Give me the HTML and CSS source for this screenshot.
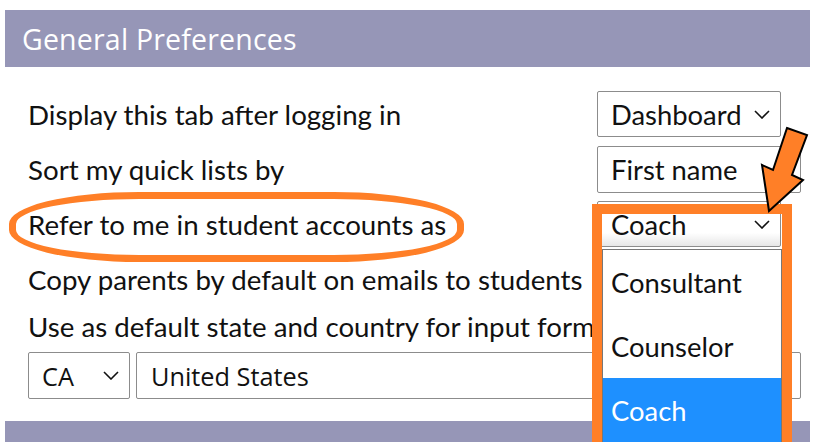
FILE: index.html
```html
<!DOCTYPE html>
<html lang="en">
<head>
<meta charset="utf-8">
<title>General Preferences</title>
<link rel="stylesheet" href="styles.css">
</head>
<body>
<div class="page">
  <div class="bar">General Preferences</div>
  <div class="prefs">
    <div class="row">
      <span class="label">Display this tab after logging in</span>
      <div class="select sel-dash"><span>Dashboard</span><svg class="chev" viewBox="0 0 16 9" width="16" height="9"><polyline points="1,1 8,8 15,1"/></svg></div>
    </div>
    <div class="row">
      <span class="label">Sort my quick lists by</span>
      <div class="select sel-first"><span>First name</span><svg class="chev" viewBox="0 0 16 9" width="16" height="9"><polyline points="1,1 8,8 15,1"/></svg></div>
    </div>
    <div class="row">
      <span class="label">Refer to me in student accounts as</span>
      <div class="select sel-coach"><span>Coach</span><svg class="chev" viewBox="0 0 16 9" width="16" height="9"><polyline points="1,1 8,8 15,1"/></svg></div>
    </div>
    <div class="row row-text">
      <span class="label">Copy parents by default on emails to students</span>
    </div>
    <div class="row row-text">
      <span class="label">Use as default state and country for input forms</span>
    </div>
    <div class="loc">
      <div class="select sel-state"><span>CA</span><svg class="chev" viewBox="0 0 16 9" width="16" height="9"><polyline points="1,1 8,8 15,1"/></svg></div>
      <div class="input-country">United States</div>
    </div>
  </div>
  <div class="bar bar-next">Student College Plan Settings Module Emails</div>

  <div class="ellipse"></div>
  <ul class="dropdown">
    <li>Consultant</li>
    <li>Counselor</li>
    <li class="active">Coach</li>
  </ul>
  <div class="highlight"></div>
  <svg class="arrow" viewBox="0 0 820 442" width="820" height="442">
    <polygon points="787,128 807,135 792,175 803,180 769,211 762,165 773,170"/>
  </svg>
</div>
</body>
</html>
```
FILE: styles.css
```css
html, body {
  margin: 0;
  padding: 0;
  background: #fff;
}
.page {
  position: relative;
  width: 820px;
  height: 442px;
  overflow: hidden;
  padding: 10px 10px 0 5px;
  box-sizing: border-box;
  font-family: Lato, "Open Sans", sans-serif;
  color: #111;
}
.bar {
  height: 57px;
  background: #9696b7;
  color: #fff;
  font-family: "Open Sans", sans-serif;
  font-size: 28.5px;
  letter-spacing: 0.2px;
  padding-left: 17px;
  display: flex;
  align-items: center;
}
.bar-next {
  margin-top: 22px;
  align-items: flex-start;
  padding-top: 15px;
  box-sizing: border-box;
}
.prefs {
  padding: 24px 0 0 23px;
  display: flex;
  flex-direction: column;
}
.row {
  display: grid;
  grid-template-columns: 569px auto;
  align-items: center;
  height: 46px;
  margin-bottom: 9px;
}
.row-text {
  height: 47px;
  margin-bottom: 0;
}
.label {
  font-size: 27.7px;
  white-space: nowrap;
}
.select {
  box-sizing: border-box;
  height: 46px;
  border: 1px solid #8c8c8c;
  border-radius: 2px;
  display: flex;
  align-items: center;
  justify-content: space-between;
  padding: 0 10px 0 13px;
  font-size: 27.4px;
  background: #fff;
}
.chev polyline {
  fill: none;
  stroke: #111;
  stroke-width: 1.6;
}
.sel-dash { width: 184px; }
.sel-first { width: 204px; height: 47px; }
.sel-coach { width: 184px; }
.loc {
  display: flex;
  gap: 6px;
  margin-top: 2px;
}
.sel-state {
  width: 102px;
  height: 47px;
  font-family: "Open Sans", sans-serif;
  font-size: 25.3px;
}
.input-country {
  box-sizing: border-box;
  width: 665px;
  height: 47px;
  border: 1px solid #8c8c8c;
  border-radius: 2px;
  display: flex;
  align-items: center;
  padding-left: 14px;
  font-family: "Open Sans", sans-serif;
  font-size: 25.3px;
}
.ellipse {
  position: absolute;
  left: 9px;
  top: 192px;
  width: 455px;
  height: 70px;
  box-sizing: border-box;
  border: 7px solid #ff7f27;
  border-radius: 130px / 32px;
}
.dropdown {
  position: absolute;
  left: 602px;
  top: 249px;
  width: 180px;
  margin: 0;
  padding: 0;
  list-style: none;
  background: #fff;
  border: 1px solid #777;
  box-sizing: border-box;
  font-size: 27.4px;
}
.dropdown li {
  height: 64px;
  display: flex;
  align-items: center;
  padding-left: 8px;
}
.dropdown li.active {
  background: #1e90ff;
  color: #fff;
}
.highlight {
  position: absolute;
  left: 592px;
  top: 204px;
  width: 200px;
  height: 248px;
  box-sizing: border-box;
  border: 10px solid #ff7f27;
  border-bottom-width: 9px;
}
.sel-coach {
  background: linear-gradient(#fff 70%, #e6e6e6);
}
.arrow {
  position: absolute;
  left: 0;
  top: 0;
}
.arrow polygon {
  fill: #ff7f27;
  stroke: #000;
  stroke-width: 2;
  stroke-linejoin: miter;
}
```
